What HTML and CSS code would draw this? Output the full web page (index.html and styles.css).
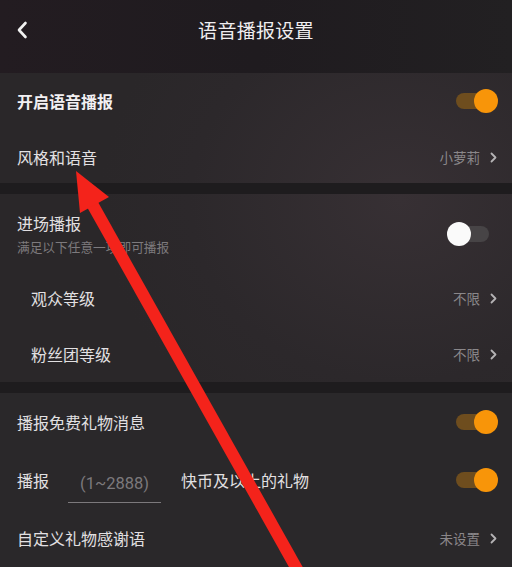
FILE: index.html
```
<!DOCTYPE html>
<html lang="zh">
<head>
<meta charset="utf-8">
<link rel="stylesheet" href="styles.css">
</head>
<body>
<div class="page">
  <header class="topbar">
    <svg class="back" width="12" height="18" viewBox="0 0 12 18"><path d="M9.5 2 L3 9 L9.5 16" fill="none" stroke="#f2f2f2" stroke-width="2.6" stroke-linecap="round" stroke-linejoin="round"/></svg>
    <h1 class="title">语音播报设置</h1>
  </header>

  <section class="group g1">
    <div class="row r1">
      <span class="label strong">开启语音播报</span>
      <span class="toggle on"><span class="knob"></span></span>
    </div>
    <div class="row r2">
      <span class="label">风格和语音</span>
      <span class="value">小萝莉<svg class="chev" width="7" height="11" viewBox="0 0 7 11"><path d="M1.5 1.5 L5.5 5.5 L1.5 9.5" fill="none" stroke="#b5b3b5" stroke-width="1.8" stroke-linecap="round" stroke-linejoin="round"/></svg></span>
    </div>
  </section>

  <div class="sep"></div>

  <section class="group g2">
    <div class="row entry">
      <div class="stack">
        <span class="label">进场播报</span>
        <span class="sub">满足以下任意一项即可播报</span>
      </div>
      <span class="toggle off"><span class="knob"></span></span>
    </div>
    <div class="row sub-row">
      <span class="label indent">观众等级</span>
      <span class="value">不限<svg class="chev" width="7" height="11" viewBox="0 0 7 11"><path d="M1.5 1.5 L5.5 5.5 L1.5 9.5" fill="none" stroke="#b5b3b5" stroke-width="1.8" stroke-linecap="round" stroke-linejoin="round"/></svg></span>
    </div>
    <div class="row sub-row">
      <span class="label indent">粉丝团等级</span>
      <span class="value">不限<svg class="chev" width="7" height="11" viewBox="0 0 7 11"><path d="M1.5 1.5 L5.5 5.5 L1.5 9.5" fill="none" stroke="#b5b3b5" stroke-width="1.8" stroke-linecap="round" stroke-linejoin="round"/></svg></span>
    </div>
  </section>

  <div class="sep"></div>

  <section class="group g3">
    <div class="row r3">
      <span class="label">播报免费礼物消息</span>
      <span class="toggle on"><span class="knob"></span></span>
    </div>
    <div class="row r3">
      <div class="inline">
        <span class="label">播报</span>
        <span class="input">(1~2888)</span>
        <span class="label">快币及以上的礼物</span>
      </div>
      <span class="toggle on"><span class="knob"></span></span>
    </div>
    <div class="row r3">
      <span class="label">自定义礼物感谢语</span>
      <span class="value">未设置<svg class="chev" width="7" height="11" viewBox="0 0 7 11"><path d="M1.5 1.5 L5.5 5.5 L1.5 9.5" fill="none" stroke="#b5b3b5" stroke-width="1.8" stroke-linecap="round" stroke-linejoin="round"/></svg></span>
    </div>
  </section>

  <svg class="arrow" width="512" height="567" viewBox="0 0 512 567">
    <line x1="90" y1="200" x2="302" y2="578" stroke="#f4231b" stroke-width="12"/>
    <polygon points="76,171 109,197 80,213" fill="#f4231b"/>
  </svg>
</div>
</body>
</html>
```
FILE: styles.css
```
* { box-sizing: border-box; }
html, body { margin: 0; padding: 0; }
body {
  width: 512px;
  height: 567px;
  overflow: hidden;
  background: #2a2729;
  font-family: "Noto Sans CJK SC", "Noto Sans", sans-serif;
  color: #e6e4e6;
}
.page {
  position: relative;
  width: 512px;
  height: 567px;
  display: flex;
  flex-direction: column;
  background: radial-gradient(ellipse 300px 260px at 400px 200px, #373034 0%, #2c282b 70%, #2a2729 100%);
}
.topbar {
  height: 73px;
  flex: none;
  display: flex;
  align-items: center;
  justify-content: center;
  position: relative;
  background: linear-gradient(90deg, #231c21 0%, #1f1b1f 50%, #222022 100%);
  padding-bottom: 15px;
}
.back {
  position: absolute;
  left: 16px;
  top: 21px;
}
.title {
  margin: 0;
  font-size: 19px;
  font-weight: 400;
  color: #f0eef0;
  letter-spacing: 0.3px;
}
.group { display: flex; flex-direction: column; }
.sep { height: 11px; flex: none; background: #1e1c1e; }
.row {
  display: flex;
  align-items: center;
  justify-content: space-between;
  padding: 0 14px 0 17px;
}
.r1 { height: 56px; padding-top: 0; }
.r2 { height: 54px; padding-top: 2px; }
.entry { height: 76px; padding-top: 4px; }
.sub-row { height: 56px; }
.r3 { height: 58px; }
.g3 { flex: 1; background: #2a282a; }
.label {
  font-size: 16px;
  color: #e2e0e2;
  line-height: 1;
}
.strong { font-weight: 700; color: #f2f0f2; }
.indent { margin-left: 14px; }
.stack { display: flex; flex-direction: column; gap: 10px; }
.sub { font-size: 12.7px; color: #7d7a7d; line-height: 1; }
.value {
  display: flex;
  align-items: center;
  gap: 10px;
  font-size: 13.5px;
  color: #8a878a;
}
.chev { margin-right: 1px; }
.toggle {
  position: relative;
  width: 42px;
  height: 24px;
  display: block;
}
.toggle::before {
  content: "";
  position: absolute;
  left: 0;
  right: 3px;
  top: 4px;
  height: 16px;
  border-radius: 8px;
}
.toggle.on::before { background: #6e4d1e; }
.toggle.off { margin-right: 9px; }
.toggle.off::before { background: #474446; left: 3px; right: 0; }
.knob {
  position: absolute;
  top: 0;
  width: 24px;
  height: 24px;
  border-radius: 50%;
}
.on .knob { right: 0; background: #f89509; }
.off .knob { left: 0; background: #fafafa; }
.inline { display: flex; align-items: center; }
.input {
  width: 93px;
  margin: 0 20px 0 19px;
  padding: 8px 0 9px;
  border-bottom: 1.5px solid #7c797c;
  text-align: center;
  font-family: "Roboto", "Noto Sans", sans-serif;
  font-size: 16.5px;
  color: #7c797c;
  position: relative;
  top: 4px;
}
.arrow {
  position: absolute;
  left: 0;
  top: 0;
  pointer-events: none;
}
```
